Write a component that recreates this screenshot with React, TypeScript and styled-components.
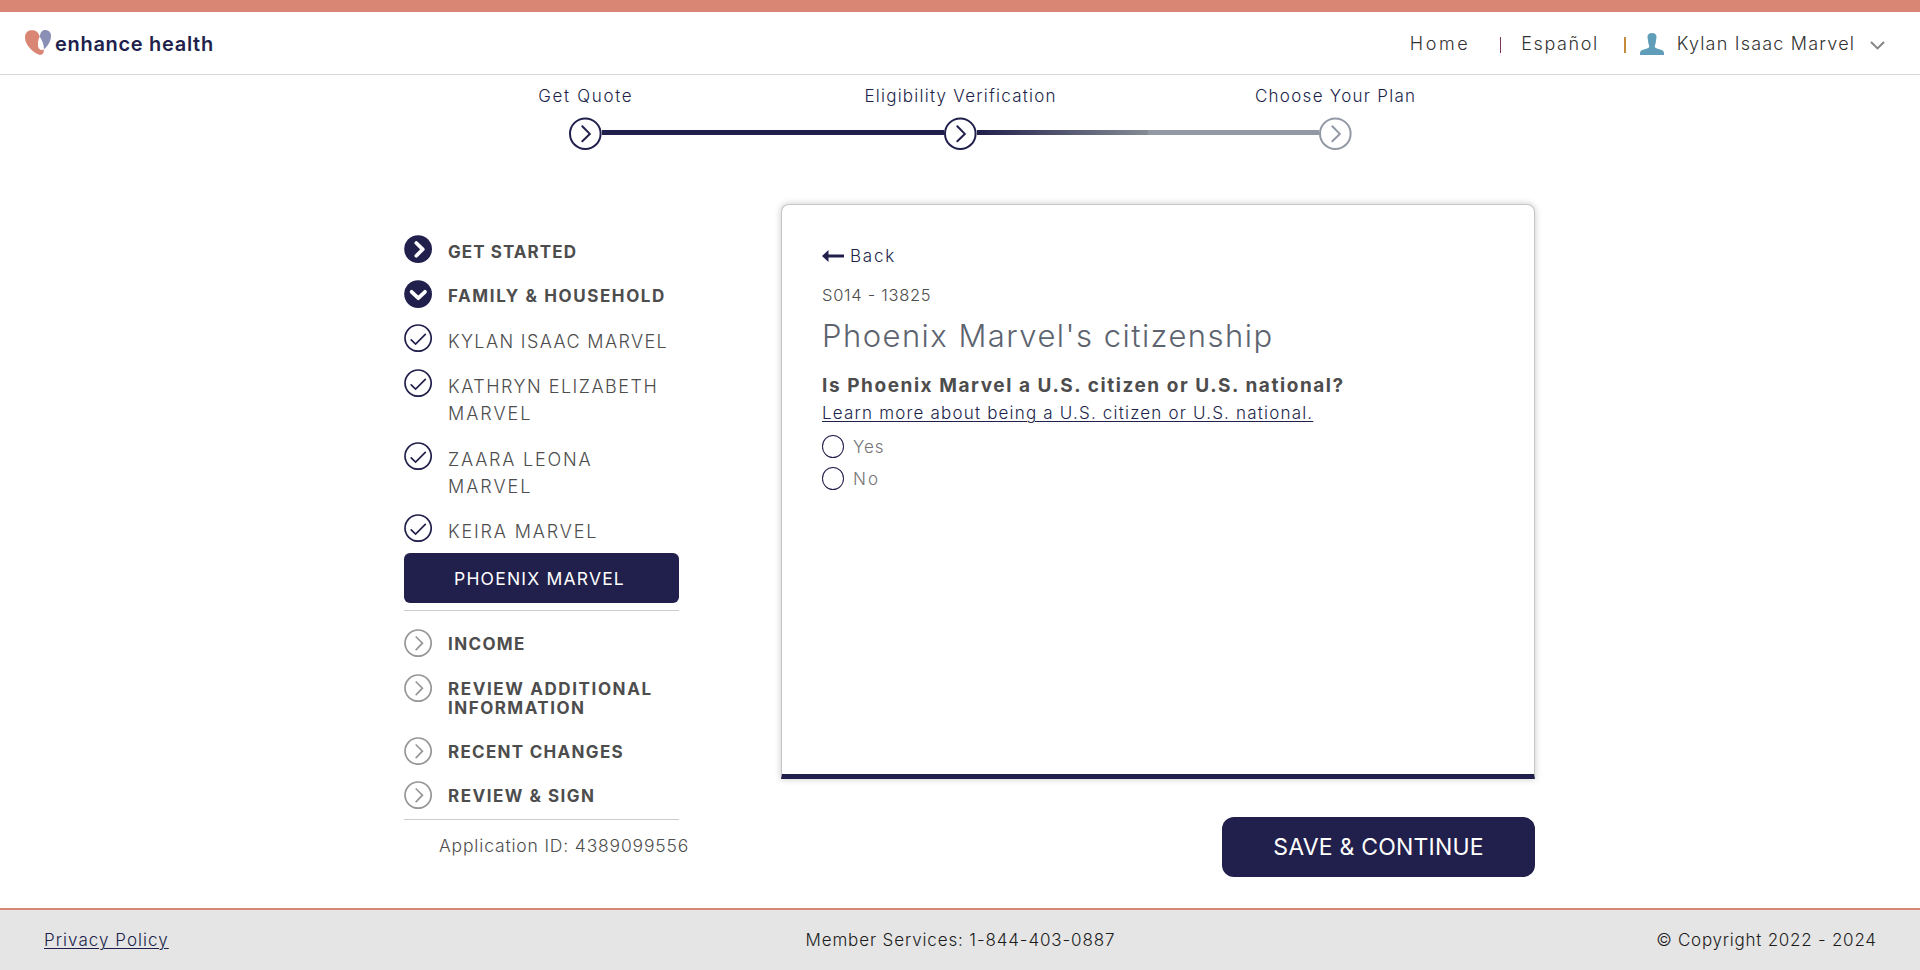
import React from "react";
import styled, { createGlobalStyle } from "styled-components";

const navy = "#211f4b";
const coral = "#da8675";
const slate = "#9299a5";

const GlobalStyle = createGlobalStyle`
  *, *::before, *::after { box-sizing: border-box; }
  body {
    margin: 0;
    background: #fff;
    color: #333;
    font-family: Inter, "Liberation Sans", sans-serif;
    font-weight: 300;
    font-size: 17px;
    font-kerning: normal;
  }
`;

/* Text run with its own tracking; the trailing gap is cancelled so it centres cleanly. */
const Tracked = styled.span<{ $track: number }>`
  letter-spacing: ${(p) => p.$track}px;
  margin-right: ${(p) => -p.$track}px;
  white-space: nowrap;
`;

const Page = styled.div`
  display: flex;
  flex-direction: column;
  height: 970px;
  overflow: hidden;
`;

const Header = styled.header`
  display: flex;
  align-items: center;
  justify-content: space-between;
  height: 75px;
  padding: 0 35px 0 25px;
  border-top: 12px solid ${coral};
  border-bottom: 1px solid #d6d6d6;
`;

const Brand = styled.a`
  display: flex;
  align-items: center;
  gap: 4px;
  color: ${navy};
  font-size: 20px;
  font-weight: 600;
  line-height: 30px;
  padding-top: 1px;
  svg { margin-bottom: 3px; }
`;

const TopNav = styled.nav`
  display: flex;
  align-items: center;
  font-size: 18px;
  line-height: 24px;
  padding-top: 1px;
`;

const Divider = styled.span<{ $color: string; $before: number; $after: number }>`
  width: 1.5px;
  height: 16px;
  margin: 2px ${(p) => p.$after}px 0 ${(p) => p.$before}px;
  background: ${(p) => p.$color};
`;

const UserButton = styled.span`
  display: flex;
  align-items: center;
  gap: 13px;
  .chevron { margin: 3px 0 0 3px; }
`;

const Progress = styled.section`
  display: flex;
  flex-direction: column;
  align-items: center;
  padding-top: 9px;
`;

const StepLabels = styled.div`
  display: grid;
  grid-template-columns: repeat(3, 375px);
  line-height: 24px;
  color: ${navy};
  text-align: center;
`;

const Track = styled.div`
  display: flex;
  align-items: flex-start;
  margin-top: 9px;
  padding-left: 1px;
  svg { display: block; }
`;

const Bar = styled.div<{ $fill: string }>`
  width: 342px;
  height: 5px;
  margin-top: 13px;
  background: ${(p) => p.$fill};
`;

const Main = styled.main`
  display: flex;
  align-items: flex-start;
  flex: 1;
  padding: 54px 0 0 404px;
`;

const Sidebar = styled.aside`
  width: 275px;
  padding-top: 31px;
`;

const NavRow = styled.div<{ $height: number }>`
  display: flex;
  align-items: flex-start;
  gap: 16px;
  height: ${(p) => p.$height}px;
  svg { flex: none; }
`;

const NavText = styled.div<{ $bold?: boolean; $drop: number }>`
  display: flex;
  flex-direction: column;
  align-items: flex-start;
  padding-top: ${(p) => p.$drop}px;
  color: #4d4d4d;
  font-size: ${(p) => (p.$bold ? 17 : 18)}px;
  font-weight: ${(p) => (p.$bold ? 700 : 300)};
  line-height: ${(p) => (p.$bold ? 19 : 27)}px;
`;

const ActiveMember = styled.div`
  height: 50px;
  padding-left: 50px;
  border-radius: 6px;
  background: ${navy};
  color: #fff;
  font-size: 17.5px;
  font-weight: 400;
  line-height: 51px;
`;

const Rule = styled.hr<{ $top: number; $bottom: number }>`
  height: 1px;
  margin: ${(p) => p.$top}px 0 ${(p) => p.$bottom}px;
  border: 0;
  background: #ccc;
`;

const ApplicationId = styled.div`
  padding-left: 35px;
  color: #4d4d4d;
  font-size: 17.5px;
  line-height: 26px;
`;

const Content = styled.div`
  display: flex;
  flex-direction: column;
  align-items: flex-end;
  gap: 38px;
  margin-left: 102px;
`;

const Card = styled.section`
  width: 754px;
  height: 575px;
  padding: 38px 40px;
  border: 1px solid #c6c6c6;
  border-bottom: 5px solid ${navy};
  border-radius: 8px 8px 0 0;
  background: #fff;
  box-shadow: 0 0 7px rgba(0, 0, 0, 0.22);
`;

const BackLink = styled.a`
  display: flex;
  align-items: center;
  gap: 6px;
  height: 26px;
  color: ${navy};
`;

const ScreenCode = styled.div`
  margin-top: 14px;
  color: #4d4d4d;
  font-size: 16.5px;
  line-height: 24px;
`;

const Title = styled.h1`
  margin: 7px 0 0;
  color: #5d6470;
  font-size: 31px;
  font-weight: 300;
  line-height: 44px;
`;

const Question = styled.p`
  margin: 14px 0 0;
  color: #4d4d4d;
  font-size: 19px;
  font-weight: 700;
  line-height: 28px;
`;

const LearnMore = styled.a`
  display: block;
  color: ${navy};
  line-height: 26px;
  text-decoration: underline;
  text-decoration-thickness: 1px;
  text-underline-offset: 2px;
`;

const Option = styled.label`
  display: flex;
  align-items: center;
  gap: 9px;
  height: 23px;
  margin-top: 9px;
  color: #757575;
  font-size: 17px;
`;

const Radio = styled.span`
  width: 22px;
  height: 23px;
  border: 1px solid ${navy};
  border-radius: 50%;
`;

const SaveButton = styled.button`
  width: 313px;
  height: 60px;
  padding: 0;
  border: 0;
  border-radius: 12px;
  background: ${navy};
  color: #fff;
  font: 400 23px/60px Inter, sans-serif;
`;

const Footer = styled.footer`
  display: grid;
  grid-template-columns: 1fr auto 1fr;
  height: 62px;
  padding: 0 44px;
  border-top: 2px solid ${coral};
  background: #e5e5e5;
  color: #1c1c1c;
  line-height: 60px;
`;

const PolicyLink = styled.a`
  color: ${navy};
  text-decoration: underline;
  text-decoration-thickness: 1px;
  text-underline-offset: 2px;
`;

const Copyright = styled.div`
  text-align: right;
`;

const StepIcon = ({ color }: { color: string }) => (
  <svg width="33" height="33" viewBox="0 0 33 33" fill="none" stroke={color} strokeWidth="2">
    <circle cx="16.3" cy="16.7" r="15.3" />
    <path d="M13.3 9.3 20.8 16.9 13.3 24.3" strokeLinecap="round" />
  </svg>
);

type IconKind = "open" | "next" | "done" | "pending";

const NavIcon = ({ kind }: { kind: IconKind }) => (
  <svg width="28" height="28" viewBox="0 0 28 28" fill="none" strokeLinecap="round">
    {(kind === "open" || kind === "next") && <circle cx="14.1" cy="14.1" r="13.9" fill={navy} />}
    {kind === "next" && <path d="M12.3 8 18.8 14.3 12.3 20.7" stroke="#fff" strokeWidth="3.7" strokeLinejoin="round" />}
    {kind === "open" && <path d="M7.6 11.8 14.3 18.2 21 11.8" stroke="#fff" strokeWidth="3.7" strokeLinejoin="round" />}
    {kind === "done" && (
      <g stroke={navy} strokeWidth="1.7">
        <circle cx="14.1" cy="14.1" r="13.1" />
        <path d="M7.2 15.8 11.6 20 21.3 10.4" />
      </g>
    )}
    {kind === "pending" && (
      <g stroke="#969696" strokeWidth="1.7">
        <circle cx="14.1" cy="14.1" r="13.1" />
        <path d="M12.2 8 18.4 14.2 12.2 20.6" />
      </g>
    )}
  </svg>
);

interface NavItem {
  kind: IconKind;
  height: number;
  drop: number;
  bold?: boolean;
  lines: [string, number][];
}

const household: NavItem[] = [
  { kind: "next", height: 45, drop: 8, bold: true, lines: [["GET STARTED", 1.07]] },
  { kind: "open", height: 44, drop: 7, bold: true, lines: [["FAMILY & HOUSEHOLD", 1.6]] },
  { kind: "done", height: 45, drop: 4, lines: [["KYLAN ISAAC MARVEL", 1.37]] },
  { kind: "done", height: 73, drop: 4, lines: [["KATHRYN ELIZABETH", 1.5], ["MARVEL", 2]] },
  { kind: "done", height: 72, drop: 4, lines: [["ZAARA LEONA", 1.79], ["MARVEL", 2]] },
  { kind: "done", height: 39, drop: 4, lines: [["KEIRA MARVEL", 1.84]] },
];

const remaining: NavItem[] = [
  { kind: "pending", height: 45, drop: 6, bold: true, lines: [["INCOME", 1.36]] },
  { kind: "pending", height: 63, drop: 6, bold: true, lines: [["REVIEW ADDITIONAL", 1.6], ["INFORMATION", 1.48]] },
  { kind: "pending", height: 44, drop: 6, bold: true, lines: [["RECENT CHANGES", 1.29]] },
  { kind: "pending", height: 38, drop: 6, bold: true, lines: [["REVIEW & SIGN", 1.5]] },
];

const NavList = ({ items }: { items: NavItem[] }) => (
  <>
    {items.map((item) => (
      <NavRow key={item.lines[0][0]} $height={item.height}>
        <NavIcon kind={item.kind} />
        <NavText $bold={item.bold} $drop={item.drop}>
          {item.lines.map(([text, track]) => (
            <Tracked key={text} $track={track}>{text}</Tracked>
          ))}
        </NavText>
      </NavRow>
    ))}
  </>
);

export default function App() {
  return (
    <Page>
      <GlobalStyle />
      <Header>
        <Brand>
          <svg width="26" height="25" viewBox="75 90 78 75">
            <path fill={coral} d="M95 91C108 90 116 98 119 110C113 120 112 140 118 147C122 151 128 151 131 148C133 158 128 165 120 165C108 163 75 140 75 112C75 99 83 91 95 91Z" />
            <path fill="#8a8fb5" d="M135 90C146 90 153 97 153 107C153 124 143 138 132 148C132 132 125 118 119 110C121 98 126 90 135 90Z" />
          </svg>
          <Tracked $track={0.69}>enhance health</Tracked>
        </Brand>
        <TopNav>
          <Tracked $track={2.6}>Home</Tracked>
          <Divider $color="#7d3560" $before={32} $after={20} />
          <Tracked $track={1.6}>Español</Tracked>
          <Divider $color="#c58a3c" $before={27} $after={14} />
          <UserButton>
            <svg width="24" height="22" viewBox="755 100 70 65" preserveAspectRatio="none">
              <path fill="#5f9db8" d="M790 100c9 0 14 5 13 13l-2 14c-1 6-3 10-3 13c0 4 5 6 14 8c10 2 13 6 13 12v5h-70v-5c0-6 3-10 13-12c9-2 14-4 14-8c0-3-2-7-3-13l-2-14c-1-8 4-13 13-13z" />
            </svg>
            <Tracked $track={1.2}>Kylan Isaac Marvel</Tracked>
            <svg className="chevron" width="15" height="9" viewBox="0 0 15 9" fill="none" stroke="#858585" strokeWidth="2">
              <path d="M1 1 7.5 7.4 14 1" />
            </svg>
          </UserButton>
        </TopNav>
      </Header>

      <Progress>
        <StepLabels>
          <div><Tracked $track={1.66}>Get Quote</Tracked></div>
          <div><Tracked $track={1.24}>Eligibility Verification</Tracked></div>
          <div><Tracked $track={1.28}>Choose Your Plan</Tracked></div>
        </StepLabels>
        <Track>
          <StepIcon color={navy} />
          <Bar $fill={navy} />
          <StepIcon color={navy} />
          <Bar $fill={`linear-gradient(to right, ${navy}, #858c94 50%, ${slate} 50%)`} />
          <StepIcon color={slate} />
        </Track>
      </Progress>

      <Main>
        <Sidebar>
          <NavList items={household} />
          <ActiveMember><Tracked $track={1.2}>PHOENIX MARVEL</Tracked></ActiveMember>
          <Rule $top={7} $bottom={18} />
          <NavList items={remaining} />
          <Rule $top={0} $bottom={13} />
          <ApplicationId><Tracked $track={0.83}>Application ID: 4389099556</Tracked></ApplicationId>
        </Sidebar>

        <Content>
          <Card>
            <BackLink>
              <svg width="22" height="12" viewBox="0 0 22 12" fill={navy}>
                <path d="M0 6 6.5 0V4.6H22V7.6H6.5V12Z" />
              </svg>
              <Tracked $track={1.8}>Back</Tracked>
            </BackLink>
            <ScreenCode><Tracked $track={0.72}>S014 - 13825</Tracked></ScreenCode>
            <Title><Tracked $track={1.46}>Phoenix Marvel's citizenship</Tracked></Title>
            <Question><Tracked $track={1.56}>Is Phoenix Marvel a U.S. citizen or U.S. national?</Tracked></Question>
            <LearnMore><Tracked $track={1.19}>Learn more about being a U.S. citizen or U.S. national.</Tracked></LearnMore>
            <Option><Radio /><Tracked $track={0.9}>Yes</Tracked></Option>
            <Option><Radio /><Tracked $track={2}>No</Tracked></Option>
          </Card>
          <SaveButton><Tracked $track={0.2}>SAVE &amp; CONTINUE</Tracked></SaveButton>
        </Content>
      </Main>

      <Footer>
        <div><PolicyLink><Tracked $track={1.04}>Privacy Policy</Tracked></PolicyLink></div>
        <div><Tracked $track={0.87}>Member Services: 1-844-403-0887</Tracked></div>
        <Copyright><Tracked $track={0.75}>© Copyright 2022 - 2024</Tracked></Copyright>
      </Footer>
    </Page>
  );
}
